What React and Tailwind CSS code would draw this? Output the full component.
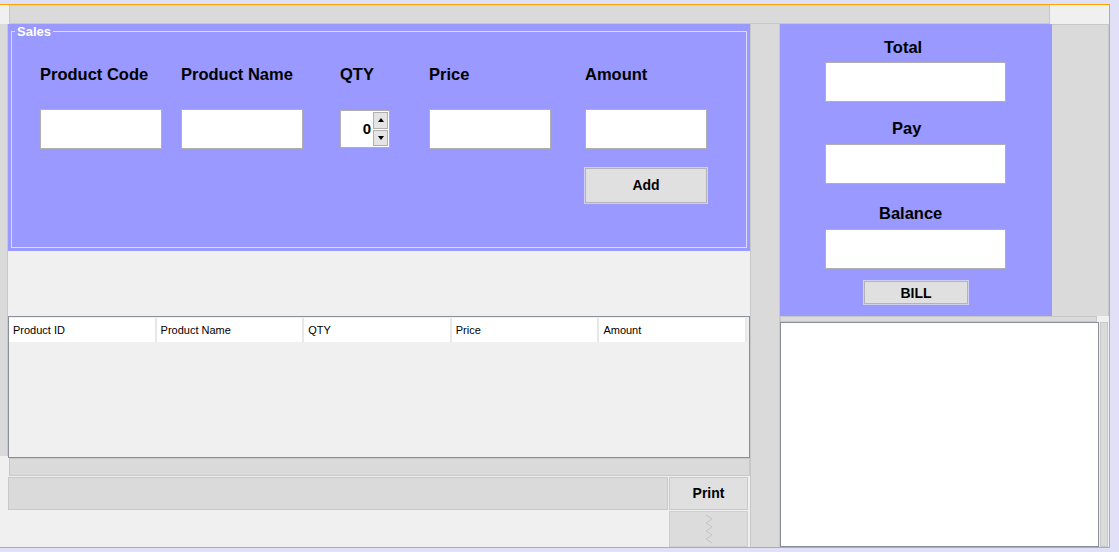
import React from "react";

const font = "font-['Liberation_Sans','Arial',sans-serif]";

function Field({ w = "w-[122px]" }) {
    return <div className={`${w} h-[40px] bg-white border border-[#b0b0b0]`} />;
}

function Spinner() {
    return (
        <div className="w-[50px] h-[38px] mt-[1px] bg-white border border-[#b0b0b0] flex">
            <div className="flex-1 flex items-center justify-end pr-[2px] text-[15px] font-bold text-black">0</div>
            <div className="w-[16px] flex flex-col gap-[1px] py-[1px] pr-[1px]">
                <div className="flex-1 bg-[#e4e4e4] border border-[#b0b0b0] flex items-center justify-center">
                    <svg width="6" height="4" viewBox="0 0 6 4"><path d="M3 0 L6 4 L0 4 Z" fill="#000" /></svg>
                </div>
                <div className="flex-1 bg-[#e4e4e4] border border-[#b0b0b0] flex items-center justify-center">
                    <svg width="6" height="4" viewBox="0 0 6 4"><path d="M0 0 L6 0 L3 4 Z" fill="#000" /></svg>
                </div>
            </div>
        </div>
    );
}

function Button({ label, className }) {
    return (
        <div className={`${className} bg-[#e0e0e0] border border-[#b4b4b4] outline outline-1 outline-[#d0d0f0] flex items-center justify-center text-[14px] font-bold text-black`}>
            {label}
        </div>
    );
}

const columns = ["Product ID", "Product Name", "QTY", "Price", "Amount"];

export default function App() {
    return (
        <div className={`w-[1119px] h-[552px] bg-[#e0e0f8] pt-[4px] ${font}`}>
            {/* orange designer frame */}
            <div className="w-[1110px] h-[544px] bg-[#ffa500] pt-[1px] pr-[1px] pb-[1px]">
                <div className="w-[1109px] h-[542px] bg-[#f0f0f0] flex flex-col overflow-hidden">
                    {/* top strip */}
                    <div className="h-[19px] flex shrink-0">
                        <div className="w-[9px]" />
                        <div className="w-[1041px] bg-[#dadada] border-b border-l border-r border-[#c8c8c8]" />
                        <div className="flex-1" />
                    </div>

                    <div className="h-[523px] shrink-0 flex">
                        {/* left edge */}
                        <div className="w-[8px] h-[432px] bg-[#dadada] border-r border-[#c8c8c8]" />

                        {/* main column */}
                        <div className="w-[742px] flex flex-col">
                            <div className="h-[227px] shrink-0 bg-[#9999ff]">
                                <fieldset className="mx-[3px] h-[224px] border border-[#dcdcff]">
                                    <legend className="ml-[3px] px-[2px] text-[13px] leading-[15px] font-bold text-white">Sales</legend>
                                    <div className="pl-[28px] pt-[25px] flex text-[16.5px] leading-[20px] font-bold text-black">
                                        <div className="w-[141px]">Product Code</div>
                                        <div className="w-[159px]">Product Name</div>
                                        <div className="w-[89px]">QTY</div>
                                        <div className="w-[156px]">Price</div>
                                        <div>Amount</div>
                                    </div>
                                    <div className="pl-[28px] mt-[25px] flex items-start">
                                        <div className="w-[141px]"><Field /></div>
                                        <div className="w-[159px]"><Field /></div>
                                        <div className="w-[89px]"><Spinner /></div>
                                        <div className="w-[156px]"><Field /></div>
                                        <div className="flex flex-col gap-[19px]">
                                            <Field />
                                            <Button label="Add" className="w-[122px] h-[35px]" />
                                        </div>
                                    </div>
                                </fieldset>
                            </div>

                            <div className="h-[65px] shrink-0" />

                            {/* table */}
                            <div className="h-[142px] shrink-0 border border-[#8a8f99] bg-[#f0f0f0] pt-[1px] pr-[2px]">
                                <div className="h-[24px] bg-white flex">
                                    {columns.map((c) => (
                                        <div key={c} className="w-[148px] h-full border-r-2 border-[#e8e8e8] pl-[4px] pt-[1px] flex items-center text-[11px] text-black">
                                            {c}
                                        </div>
                                    ))}
                                </div>
                            </div>

                            <div className="h-[18px] shrink-0 ml-[1px] bg-[#dadada] border border-[#c8c8c8]" />

                            <div className="h-[33px] shrink-0 mt-[1px] flex">
                                <div className="flex-1 bg-[#dadada] border border-[#c8c8c8]" />
                                <Button label="Print" className="w-[79px] h-[33px] ml-[1px] mr-[2px] !outline-0 !border-[#c4c4f0]" />
                            </div>

                            <div className="flex-1 min-h-0 flex overflow-hidden">
                                <div className="flex-1" />
                                <div className="w-[79px] mr-[2px] mt-[1px] bg-[#dcdcdc] border border-[#cfcfcf] flex justify-center pt-[2px]">
                                    <svg width="8" height="30" viewBox="0 0 8 30">
                                        <path d="M1 1 L7 5 L1 9 L7 13 L1 17 L7 21 L1 25 L7 29" fill="none" stroke="#c4c4c4" strokeWidth="1" />
                                    </svg>
                                </div>
                            </div>
                        </div>

                        {/* divider column */}
                        <div className="w-[30px] h-full bg-[#dadada] border-x border-[#c8c8c8]" />

                        {/* right column */}
                        <div className="flex-1 flex flex-col">
                            <div className="h-[292px] shrink-0 flex">
                                <div className="w-[272px] bg-[#9999ff] pt-[13px] flex flex-col text-[16.5px] leading-[20px] font-bold text-black">
                                    <div className="ml-[104px]">Total</div>
                                    <div className="ml-[45px] mt-[5px]"><Field w="w-[181px]" /></div>
                                    <div className="ml-[112px] mt-[16px]">Pay</div>
                                    <div className="ml-[45px] mt-[6px]"><Field w="w-[181px]" /></div>
                                    <div className="ml-[99px] mt-[19px]">Balance</div>
                                    <div className="ml-[45px] mt-[6px]"><Field w="w-[181px]" /></div>
                                    <Button label="BILL" className="ml-[84px] mt-[12px] w-[104px] h-[23px]" />
                                </div>
                                <div className="flex-1 bg-[#dadada] border-t border-r border-[#c8c8c8]" />
                            </div>
                            <div className="h-[6px] shrink-0 w-[317px] bg-[#dadada] border border-[#c8c8c8]" />
                            <div className="flex-1 min-h-0 flex">
                                <div className="w-[319px] bg-white border border-[#8a8f99]" />
                                <div className="w-[8px] ml-[1px] bg-[#dadada] border border-[#c8c8c8]" />
                            </div>
                        </div>
                    </div>
                </div>
            </div>
        </div>
    );
}
